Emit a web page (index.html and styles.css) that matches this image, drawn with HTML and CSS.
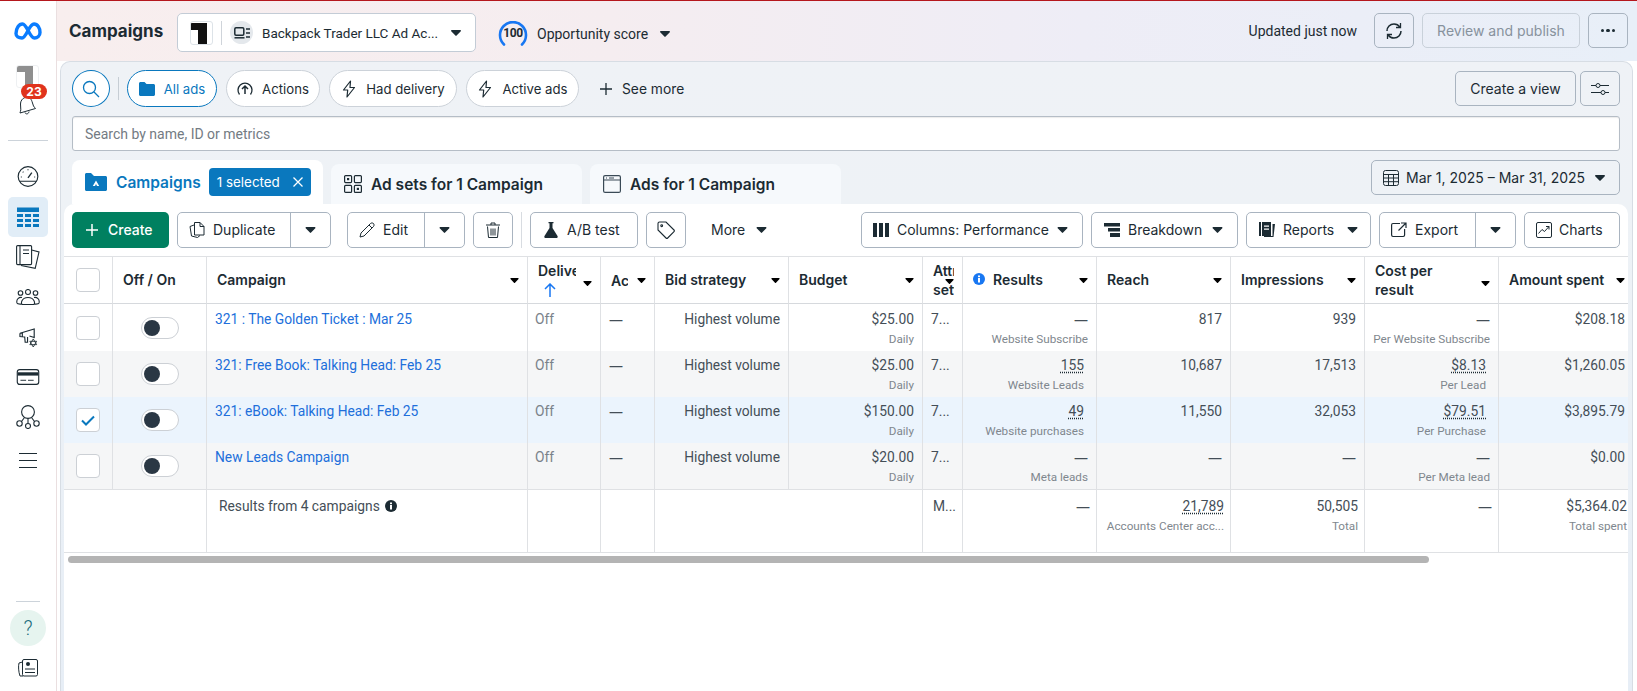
FILE: index.html
```html
<!DOCTYPE html>
<html lang="en">
<head>
<meta charset="utf-8">
<title>Campaigns</title>
<link rel="stylesheet" href="styles.css">
</head>
<body>
<svg class="defs" aria-hidden="true">
  <symbol id="i-caret" viewBox="0 0 10 6"><path d="M.8 0h8.4c.7 0 1 .7.6 1.200L5.600 5.600a.8.8 0 0 1-1.200 0L.2 1.200C-.2.7.1 0 .8 0z"/></symbol>
  <symbol id="i-flash" viewBox="0 0 16 18"><path d="M9.500 1 2.500 10h4.200L6 17l7.500-9.500H9L9.500 1z" fill="none" stroke="currentColor" stroke-width="1.200" stroke-linejoin="round"/></symbol>
</svg>
<div class="app">
  <aside class="sidebar">
    <svg class="meta" viewBox="0 0 28 18"><path d="M2 11.500C2 6 5 2 8.500 2c4.500 0 7 14 12 14 2.800 0 5.500-2 5.500-5.500C26 6 23.500 2 20 2c-5 0-7.500 14-12 14-3.500 0-6-1.500-6-4.500z" fill="none" stroke="#0a7cff" stroke-width="3.400"/></svg>
    <div class="avatar-block">
      <div class="avatar"><span class="avatar-bar"></span><span class="avatar-stem"></span></div>
      <svg class="bell" viewBox="0 0 20 20"><path d="M8 2.500c3-1 6 .5 7 4l1.500 4.500c.3 1 1.500 1.500 2 2.500L3 18c0-1 .8-2 .8-3.200L3.500 9C3.400 6 5.500 3.300 8 2.500zM8 17.500c.5 2 3.500 2 4-1" fill="none" stroke="#1c2b33" stroke-width="1"/></svg>
      <span class="badge-count">23</span>
    </div>
    <hr class="side-rule">
    <nav class="side-nav">
      <a class="side-item"><svg class="ico22" viewBox="0 0 22 22" fill="none" stroke="#1c2b33"><circle cx="11" cy="11" r="10.300" stroke-width="1.200"/><path d="M11 12.500 15 7" stroke-width="1.400"/><path d="M11 3.500v1M5.500 6l.7.7M3.500 11.500h1M17.500 11.500h1M2 16h18" stroke-width="1.200"/></svg></a>
      <a class="side-item active"><svg class="ico22" viewBox="0 0 22 20" fill="#0a78be"><rect x="0" y="0" width="22" height="4.500"/><rect x="0" y="6.500" width="6" height="3"/><rect x="8" y="6.500" width="6" height="3"/><rect x="16" y="6.500" width="6" height="3"/><rect x="0" y="11.500" width="6" height="3"/><rect x="8" y="11.500" width="6" height="3"/><rect x="16" y="11.500" width="6" height="3"/><rect x="0" y="16.500" width="6" height="3"/><rect x="8" y="16.500" width="6" height="3"/><rect x="16" y="16.500" width="6" height="3"/></svg></a>
      <a class="side-item"><svg class="ico24" viewBox="0 0 24 24" fill="none" stroke="#1c2b33" stroke-width="1.100"><rect x=".6" y=".6" width="15" height="19" rx="1"/><path d="M4 .6v19M7 5h6M7 8.500h6"/><path d="M15.600 5 23 7l-3.800 16.300L5 20.500"/></svg></a>
      <a class="side-item"><svg class="ico24h" viewBox="0 0 24 16" fill="none" stroke="#1c2b33" stroke-width="1.100"><circle cx="4.500" cy="4" r="2.300"/><circle cx="12" cy="3" r="2.500"/><circle cx="19.500" cy="4" r="2.300"/><path d="M1 14c-1-4 2-6 5-5.500M23 14c1-4-2-6-5-5.500M6.500 15.500c-2 0-1.500-7 5.500-7s7.500 7 5.500 7zM1 14c.3 1 3 1.200 5 1M23 14c-.3 1-3 1.200-5 1"/></svg></a>
      <a class="side-item"><svg class="ico18" viewBox="0 0 20 20" fill="none" stroke="#1c2b33" stroke-width="1.200"><path d="M1 5.500 16 1v9l-5-1.500M1 5.500v3.500l5 .5 .5 5.500h2.500v-5.500M3.500 5v4.200"/><path d="M15 11.500l3.600 6h-7.200zM15 20l-3.600-6h7.200z" stroke-width=".9"/></svg></a>
      <a class="side-item"><svg class="ico24h" viewBox="0 0 24 17" fill="none" stroke="#1c2b33"><rect x=".6" y=".6" width="22.800" height="15.800" rx="2.500" stroke-width="1.200"/><rect x="1" y="3.500" width="22" height="3.500" fill="#1c2b33" stroke="none"/><path d="M4 12h6M12 12h6" stroke-width="1"/></svg></a>
      <a class="side-item"><svg class="ico24t" viewBox="0 0 24 24" fill="none" stroke="#1c2b33" stroke-width="1.100"><circle cx="12" cy="7" r="6.400"/><circle cx="3.500" cy="18.500" r="2.700"/><circle cx="12" cy="21" r="2.500"/><circle cx="20.500" cy="18.500" r="2.700"/><path d="M12 13.500v5M8.500 12.500 5.500 16.500M15.500 12.500l3 4"/></svg></a>
      <a class="side-item menu"><svg class="ico18w" viewBox="0 0 18 15" stroke="#1c2b33" stroke-width="1"><path d="M0 .5h18M0 7.500h18M0 14.500h18"/></svg></a>
    </nav>
    <div class="side-foot">
      <hr class="side-rule short">
      <span class="help">?</span>
      <svg class="news" viewBox="0 0 20 18" fill="none" stroke="#1c2b33" stroke-width="1"><rect x="4.500" y=".5" width="15" height="16.500" rx="1.500"/><circle cx="10" cy="5" r="2" fill="#1c2b33" stroke="none"/><path d="M7 10h10M7 13.500h10"/><path d="M4.500 3 1 4c-.8 3-.5 9 1 13h3"/></svg>
    </div>
  </aside>

  <main class="main">
    <header class="header">
      <h1 class="title">Campaigns</h1>
      <div class="account">
        <span class="acc-logo"><span class="acc-bar"></span><span class="acc-stem"></span></span>
        <span class="acc-sep"></span>
        <span class="acc-round"><svg viewBox="0 0 16 12" width="16" height="12" fill="none" stroke="#1c2b33"><rect x=".8" y=".8" width="9" height="7.500" rx="1.200" stroke-width="1.500"/><path d="M.5 10.800h10" stroke-width="1.500"/><path d="M12 2h4M12 6h4M12 10h4" stroke-width="1.300"/></svg></span>
        <span class="acc-name">Backpack Trader LLC Ad Ac...</span>
        <svg class="caret acc-caret"><use href="#i-caret"/></svg>
      </div>
      <div class="score">
        <span class="ring"><svg viewBox="0 0 30 26" width="30" height="26" fill="none"><path d="M6 23.500A13 13 0 1 1 24 23.500" stroke="#1877f2" stroke-width="2.600" stroke-linecap="round"/></svg><b class="ring-num">100</b></span>
        <span class="score-label">Opportunity score</span>
        <svg class="caret"><use href="#i-caret"/></svg>
      </div>
      <div class="head-right">
        <span class="updated">Updated just now</span>
        <button class="hbtn icon-w40"><svg viewBox="0 0 18 18" width="18" height="18" fill="none" stroke="#1c2b33" stroke-width="1.500"><path d="M2 9c0-4 3-7 7-7 2.500 0 4.500 1 5.800 3M16 9c0 4-3 7-7 7-2.500 0-4.500-1-5.800-3"/><path d="M15.500 1v4.500H11M2.500 17v-4.500H7" stroke-width="1.300"/></svg></button>
        <button class="hbtn review">Review and publish</button>
        <button class="hbtn icon-w40 dots"><span></span><span></span><span></span></button>
      </div>
    </header>

    <section class="card">
      <div class="filters">
        <button class="search-round"><svg viewBox="0 0 18 18" width="18" height="18" fill="none" stroke="#0a78be" stroke-width="1.300"><circle cx="7.500" cy="7.500" r="6"/><path d="m12 12 5 5"/></svg></button>
        <span class="filter-sep"></span>
        <button class="pill pill-on w-all"><svg viewBox="0 0 16 14" width="16" height="14" fill="#0a78be"><path d="M0 1.500C0 .7.700 0 1.500 0h4l2 2h7c.8 0 1.500.7 1.500 1.500v9c0 .8-.7 1.500-1.500 1.500h-13C.7 14 0 13.300 0 12.500z"/></svg>All ads</button>
        <button class="pill w-actions"><svg viewBox="0 0 16 16" width="16" height="16" fill="none" stroke="#1c2b33" stroke-width="1.300"><path d="M2.500 13.500A7 7 0 1 1 13.500 13.500"/><path d="M8 13V5M5 8l3-3 3 3" stroke-width="1.500"/></svg>Actions</button>
        <button class="pill w-had"><svg class="ico-flash"><use href="#i-flash"/></svg>Had delivery</button>
        <button class="pill w-active"><svg class="ico-flash"><use href="#i-flash"/></svg>Active ads</button>
        <button class="see-more"><svg viewBox="0 0 12 12" width="12" height="12" stroke="#1c2b33" stroke-width="1.300"><path d="M6 0v12M0 6h12"/></svg>See more</button>
        <div class="filters-right">
          <button class="hbtn w-view">Create a view</button>
          <button class="hbtn icon-w40"><svg viewBox="0 0 18 14" width="18" height="14" fill="none" stroke="#1c2b33"><path d="M0 3.500h5M9 3.500h9M0 10.500h10M14 10.500h4"/><circle cx="7" cy="3.500" r="2"/><circle cx="12" cy="10.500" r="2"/></svg></button>
        </div>
      </div>
      <div class="search-box">Search by name, ID or metrics</div>
      <div class="tabs">
        <div class="tab tab-on">
          <svg viewBox="0 0 22 18" width="22" height="18"><path fill="#0a78be" d="M0 1.500C0 .7.700 0 1.500 0h4.500l3 3h11.500c.8 0 1.500.7 1.500 1.500v12c0 .8-.7 1.500-1.500 1.500h-19C.7 18 0 17.300 0 16.500z"/><path fill="#fff" d="M11 7.500l3.200 5.500h-2.200l-1-2-1 2H7.800z"/></svg>
          <span class="tab-text">Campaigns</span>
          <span class="selected">1 selected<svg viewBox="0 0 10 10" width="10" height="10" stroke="#fff" stroke-width="1.300"><path d="m.5.500 9 9M9.500.500l-9 9"/></svg></span>
        </div>
        <div class="tab tab-adsets">
          <svg viewBox="0 0 18 18" width="18" height="18" fill="none" stroke="#1c2b33" stroke-width="1.200"><rect x=".6" y=".6" width="7" height="7" rx="1"/><rect x="10.400" y=".6" width="7" height="7" rx="1"/><rect x=".6" y="10.400" width="7" height="7" rx="1"/><rect x="10.400" y="10.400" width="7" height="7" rx="1"/><rect x="3" y="3" width="2.200" height="2.200" fill="#1c2b33" stroke="none"/><rect x="12.800" y="12.800" width="2.200" height="2.200" fill="#1c2b33" stroke="none"/></svg>
          <span>Ad sets for 1 Campaign</span>
        </div>
        <div class="tab tab-ads">
          <svg viewBox="0 0 18 18" width="18" height="18" fill="none" stroke="#3a4a56" stroke-width="1.200"><rect x=".6" y=".6" width="16.800" height="16.800" rx="1.500"/><path d="M.6 5h16.800M3 3h1M6 3h5"/></svg>
          <span>Ads for 1 Campaign</span>
        </div>
        <button class="hbtn date"><svg viewBox="0 0 16 16" width="16" height="16" fill="none" stroke="#1c2b33"><rect x=".5" y=".5" width="15" height="15" rx="2"/><path d="M.5 4.500h15M.5 8h15M.5 11.700h15M5.500 4.500v11M10.500 4.500v11"/></svg>Mar 1, 2025 – Mar 31, 2025<svg class="caret push"><use href="#i-caret"/></svg></button>
      </div>

      <div class="panel">
        <div class="toolbar">
          <button class="btn create"><svg viewBox="0 0 12 12" width="12" height="12" stroke="#fff" stroke-width="1.500"><path d="M6 0v12M0 6h12"/></svg>Create</button>
          <div class="split w-dup">
            <button class="btn-main"><svg viewBox="0 0 16 16" width="16" height="16" fill="none" stroke="#1c2b33" stroke-width="1"><path d="M5.500.5H11l4 4v8.500H5.500zM11 .5v4h4"/><path d="M5 3 1 4.500 2.500 14l6 1.500 2.500-2"/></svg>Duplicate</button>
            <button class="btn-drop"><svg class="caret wide"><use href="#i-caret"/></svg></button>
          </div>
          <div class="split w-edit">
            <button class="btn-main"><svg viewBox="0 0 16 16" width="16" height="16" fill="none" stroke="#1c2b33" stroke-width="1"><path d="M1 15l1-4L11.500 1.500c.7-.7 2.300-.7 3 0s.7 2.300 0 3L5 14z"/><path d="M10 3l3 3"/></svg>Edit</button>
            <button class="btn-drop"><svg class="caret wide"><use href="#i-caret"/></svg></button>
          </div>
          <button class="btn w-icon"><svg viewBox="0 0 14 16" width="14" height="16" fill="none" stroke="#1c2b33"><path d="M0 3h14M5 3V1h4v2M1.500 4.500 2.500 15.500h9l1-11M5 6.500v7M7 6.500v7M9 6.500v7"/></svg></button>
          <span class="tool-sep"></span>
          <button class="btn w-ab"><svg viewBox="0 0 14 16" width="14" height="16" fill="#1c2b33"><path d="M4.500 0h5v1.200h-1V6l5 8c.6 1-.1 2-1.100 2H1.600c-1 0-1.700-1-1.100-2l5-8V1.200h-1z"/></svg>A/B test</button>
          <button class="btn w-icon"><svg viewBox="0 0 18 18" width="18" height="18" fill="none" stroke="#1c2b33" stroke-width="1.100"><path d="M1 2.500C1 1.700 1.700 1 2.500 1H9l8 8c.5.500.5 1.200 0 1.700L10.700 17c-.5.500-1.200.5-1.700 0L1 9z"/><circle cx="4.700" cy="4.700" r=".9"/></svg></button>
          <button class="more">More<svg class="caret wide"><use href="#i-caret"/></svg></button>
          <div class="tool-right">
            <button class="btn w-cols"><svg viewBox="0 0 16 14" width="16" height="14" fill="#1c2b33"><rect width="4" height="14"/><rect x="6" width="4" height="14"/><rect x="12" width="4" height="14"/></svg>Columns: Performance<svg class="caret wide push"><use href="#i-caret"/></svg></button>
            <button class="btn w-break"><svg viewBox="0 0 16 14" width="16" height="14" fill="#1c2b33"><rect width="16" height="3.500"/><rect x="4" y="5" width="12" height="3.500"/><rect x="6" y="10" width="10" height="4"/></svg>Breakdown<svg class="caret wide push"><use href="#i-caret"/></svg></button>
            <button class="btn w-rep"><svg viewBox="0 0 16 16" width="16" height="16" fill="#1c2b33"><rect x="0" y="0" width="2" height="14"/><path d="M3 0h9v14H3zM5 3.500v1.200h5V3.500zM5 6.500v1.200h5V6.500z" fill-rule="evenodd"/><path d="M13.500 2H16l-1.500 13H5v-1h8.500z"/></svg>Reports<svg class="caret wide push"><use href="#i-caret"/></svg></button>
            <div class="split w-exp">
              <button class="btn-main"><svg viewBox="0 0 16 16" width="16" height="16" fill="none" stroke="#1c2b33" stroke-width="1.200"><path d="M9 1.500H2c-.8 0-1.400.6-1.400 1.400v10.200c0 .8.600 1.400 1.400 1.400h10.200c.8 0 1.400-.6 1.400-1.400V7"/><path d="M10 1h5v5M15 1 7.500 8.500"/></svg>Export</button>
              <button class="btn-drop"><svg class="caret wide"><use href="#i-caret"/></svg></button>
            </div>
            <button class="btn w-charts"><svg viewBox="0 0 16 16" width="16" height="16" fill="none" stroke="#1c2b33"><rect x=".5" y=".5" width="15" height="15" rx="1.500"/><path d="m2.500 11.500 3.500-4 2.500 2 4.500-5M10 4.500h3v3"/></svg>Charts</button>
          </div>
        </div>

        <div class="table-wrap">
          <table class="grid">
            <colgroup>
              <col class="c-check"><col class="c-toggle"><col class="c-name"><col class="c-deliv"><col class="c-ac"><col class="c-bid"><col class="c-budget"><col class="c-attr"><col class="c-data"><col class="c-reach"><col class="c-imp"><col class="c-cost"><col class="c-spent">
            </colgroup>
            <thead>
              <tr>
                <th class="center"><span class="check"></span></th>
                <th><div class="th"><span>Off / On</span></div></th>
                <th><div class="th"><span>Campaign</span><svg class="caret small"><use href="#i-caret"/></svg></div></th>
                <th><div class="th"><span class="th-clip w38">Delivery<svg class="arrow" viewBox="0 0 12 14" width="12" height="14" fill="none" stroke="#1877f2" stroke-width="1.500"><path d="M6 14V1.500M1 6l5-5 5 5"/></svg></span><svg class="caret small low"><use href="#i-caret"/></svg></div></th>
                <th><div class="th"><span class="th-clip w17">Actions</span><svg class="caret small"><use href="#i-caret"/></svg></div></th>
                <th><div class="th"><span>Bid strategy</span><svg class="caret small"><use href="#i-caret"/></svg></div></th>
                <th><div class="th"><span>Budget</span><svg class="caret small"><use href="#i-caret"/></svg></div></th>
                <th><div class="th th-attr"><span class="th-clip w24">Attribution setting</span><svg class="caret small over"><use href="#i-caret"/></svg></div></th>
                <th><div class="th"><span class="with-info"><svg viewBox="0 0 12 12" width="12" height="12"><circle cx="6" cy="6" r="6" fill="#1877f2"/><rect x="5" y="5" width="2" height="4.500" fill="#fff"/><rect x="5" y="2.500" width="2" height="1.700" fill="#fff"/></svg>Results</span><svg class="caret small"><use href="#i-caret"/></svg></div></th>
                <th><div class="th"><span>Reach</span><svg class="caret small"><use href="#i-caret"/></svg></div></th>
                <th><div class="th"><span>Impressions</span><svg class="caret small"><use href="#i-caret"/></svg></div></th>
                <th><div class="th"><span class="w80">Cost per result</span><svg class="caret small low"><use href="#i-caret"/></svg></div></th>
                <th><div class="th"><span>Amount spent</span><svg class="caret small"><use href="#i-caret"/></svg></div></th>
              </tr>
            </thead>
            <tbody>
              <tr class="first">
                <td class="center"><span class="check"></span></td>
                <td class="center"><span class="toggle"></span></td>
                <td class="text"><a class="link">321 : The Golden Ticket : Mar 25</a></td>
                <td class="text off">Off</td><td class="text"><span class="dash">—</span></td><td class="num">Highest volume</td>
                <td class="num"><div>$25.00</div><div class="sub">Daily</div></td>
                <td class="text">7...</td>
                <td class="num"><div><span class="dash">—</span></div><div class="sub">Website Subscribe</div></td>
                <td class="num">817</td><td class="num">939</td>
                <td class="num"><div><span class="dash">—</span></div><div class="sub">Per Website Subscribe</div></td>
                <td class="num">$208.18</td>
              </tr>
              <tr class="alt">
                <td class="center"><span class="check"></span></td>
                <td class="center"><span class="toggle"></span></td>
                <td class="text"><a class="link">321: Free Book: Talking Head: Feb 25</a></td>
                <td class="text off">Off</td><td class="text"><span class="dash">—</span></td><td class="num">Highest volume</td>
                <td class="num"><div>$25.00</div><div class="sub">Daily</div></td>
                <td class="text">7...</td>
                <td class="num dotted"><div><u>155</u></div><div class="sub">Website Leads</div></td>
                <td class="num">10,687</td><td class="num">17,513</td>
                <td class="num dotted"><div><u>$8.13</u></div><div class="sub">Per Lead</div></td>
                <td class="num">$1,260.05</td>
              </tr>
              <tr class="sel">
                <td class="center"><span class="check on"><svg viewBox="0 0 14 11" width="14" height="11" fill="none" stroke="#0a78be" stroke-width="2"><path d="m1 5.500 4 4 8-8"/></svg></span></td>
                <td class="center"><span class="toggle"></span></td>
                <td class="text"><a class="link">321: eBook: Talking Head: Feb 25</a></td>
                <td class="text off">Off</td><td class="text"><span class="dash">—</span></td><td class="num">Highest volume</td>
                <td class="num"><div>$150.00</div><div class="sub">Daily</div></td>
                <td class="text">7...</td>
                <td class="num dotted"><div><u>49</u></div><div class="sub">Website purchases</div></td>
                <td class="num">11,550</td><td class="num">32,053</td>
                <td class="num dotted"><div><u>$79.51</u></div><div class="sub">Per Purchase</div></td>
                <td class="num">$3,895.79</td>
              </tr>
              <tr class="alt last">
                <td class="center"><span class="check"></span></td>
                <td class="center"><span class="toggle"></span></td>
                <td class="text"><a class="link">New Leads Campaign</a></td>
                <td class="text off">Off</td><td class="text"><span class="dash">—</span></td><td class="num">Highest volume</td>
                <td class="num"><div>$20.00</div><div class="sub">Daily</div></td>
                <td class="text">7...</td>
                <td class="num"><div><span class="dash">—</span></div><div class="sub">Meta leads</div></td>
                <td class="num"><span class="dash">—</span></td><td class="num"><span class="dash">—</span></td>
                <td class="num"><div><span class="dash">—</span></div><div class="sub">Per Meta lead</div></td>
                <td class="num">$0.00</td>
              </tr>
            </tbody>
            <tfoot>
              <tr>
                <td colspan="2"></td>
                <td class="text foot-name"><span>Results from 4 campaigns</span><svg viewBox="0 0 12 12" width="12" height="12"><circle cx="6" cy="6" r="6" fill="#1c2b33"/><rect x="5" y="5" width="2" height="4.500" fill="#fff"/><rect x="5" y="2.500" width="2" height="1.700" fill="#fff"/></svg></td>
                <td></td><td></td><td colspan="2"></td>
                <td class="text foot-attr">M...</td>
                <td class="num"><span class="dash">—</span></td>
                <td class="num"><div><u>21,789</u></div><div class="sub">Accounts Center acc...</div></td>
                <td class="num"><div>50,505</div><div class="sub">Total</div></td>
                <td class="num"><span class="dash">—</span></td>
                <td class="num"><div>$5,364.02</div><div class="sub">Total spent</div></td>
              </tr>
            </tfoot>
          </table>
        </div>
        <div class="scrollbar"></div>
      </div>
    </section>
  </main>
</div>
</body>
</html>
```
FILE: styles.css
```css
* { box-sizing: border-box; }
html, body { margin: 0; height: 100%; }
body { font-family: "Roboto", "Liberation Sans", sans-serif; font-size: 14px; color: #1c2b33; background: #fff; overflow: hidden; }
.defs { display: none; }
button { font: inherit; color: inherit; background: none; border: 0; padding: 0; cursor: pointer; }
a { color: inherit; }
.app { display: flex; height: 691px; border-top: 1px solid #b5171d; overflow: hidden; }
.caret { width: 10px; height: 6px; fill: #1c2b33; flex: none; display: block; }
.caret.small { width: 9px; height: 5px; fill: #000; }
.caret.low { margin-top: 6px; }
.push { margin-left: auto; }

/* sidebar */
.sidebar { width: 57px; flex: none; background: #fff; border-right: 1px solid #eadfe0; display: flex; flex-direction: column; align-items: center; padding-top: 21px; }
.meta { width: 28px; height: 18px; display: block; }
.avatar-block { position: relative; width: 40px; height: 50px; margin-top: 25px; }
.avatar { position: absolute; left: 8px; top: 0; width: 23px; height: 23px; border: 1px solid #eef0f2; border-radius: 3px; overflow: hidden; background: #fff; }
.avatar-bar { position: absolute; left: 0; top: 0; width: 16px; height: 6px; background: #8f8f8f; }
.avatar-stem { position: absolute; left: 8px; top: 0; width: 8px; height: 23px; background: #8f8f8f; }
.bell { position: absolute; left: 9px; top: 30px; width: 20px; height: 20px; }
.badge-count { position: absolute; left: 13px; top: 19px; width: 26px; height: 15px; border-radius: 8px; background: #e0331c; color: #fff; font: 700 12px/15px "Inter", sans-serif; text-align: center; }
.side-rule { width: 40px; height: 1px; margin: 25px 0 0; border: 0; background: #ccd3da; flex: none; }
.side-rule.short { width: 24px; margin: 0; }
.side-nav { margin-top: 15px; display: flex; flex-direction: column; }
.side-item { width: 40px; height: 40px; display: flex; align-items: center; justify-content: center; border-radius: 5px; }
.side-item.active { background: #e1edf7; margin-top: 1px; }
.side-item.menu { margin-top: 3px; }
.ico22 { width: 22px; height: 21px; display: block; }
.ico24 { width: 24px; height: 24px; display: block; }
.ico24h { width: 24px; height: 16px; display: block; }
.ico18 { width: 19px; height: 19px; display: block; }
.ico24t { width: 24px; height: 24px; display: block; }
.ico18w { width: 18px; height: 15px; display: block; }
.side-foot { margin-top: auto; display: flex; flex-direction: column; align-items: center; padding-bottom: 14px; }
.help { width: 36px; height: 36px; margin-top: 8px; border-radius: 50%; background: #e6f4ef; color: #1b6c7c; display: flex; align-items: center; justify-content: center; font-size: 20px; font-weight: 300; }
.news { width: 20px; height: 18px; margin-top: 13px; display: block; }

/* main */
.main { flex: 1; min-width: 0; display: flex; flex-direction: column; background: #fff; }
.header { height: 60px; flex: none; display: flex; align-items: flex-start; padding: 12px 9px 0 12px; background: linear-gradient(90deg, #f8eeee 0%, #f5edf0 35%, #eeedf6 65%, #e8eff8 100%); }
.title { margin: 3px 0 0; width: 95px; font: 700 17px/30px "Inter", sans-serif; white-space: nowrap; }
.account { margin-left: 13px; width: 299px; height: 39px; display: flex; align-items: center; padding: 0 14px 0 12px; background: #fff; border: 1px solid #c3ccd6; border-radius: 5px; }
.acc-logo { position: relative; width: 23px; height: 24px; border: 1px solid #dde3e8; border-radius: 3px; flex: none; overflow: hidden; }
.acc-bar { position: absolute; left: 0; top: 1px; width: 16px; height: 7px; background: #111; }
.acc-stem { position: absolute; left: 7px; top: 1px; width: 9px; height: 21px; background: #111; }
.acc-sep { width: 1px; height: 24px; margin: 0 8px; background: #cfd4da; flex: none; }
.acc-round { width: 23px; height: 23px; border-radius: 50%; background: #e4e8ec; display: flex; align-items: center; justify-content: center; flex: none; }
.acc-name { margin-left: 9px; font-size: 13.500px; white-space: nowrap; width: 176px; }
.acc-caret { margin-left: auto; }
.score { margin-left: 22px; height: 35px; display: flex; align-items: center; margin-top: 3px; }
.ring { position: relative; width: 30px; height: 26px; display: block; flex: none; }
.ring svg { display: block; }
.ring-num { position: absolute; left: 0; right: 0; top: 5px; text-align: center; font: 700 12px/14px "Roboto", sans-serif; letter-spacing: -.4px; }
.score-label { margin-left: 9px; white-space: nowrap; width: 112px; }
.score .caret { margin-left: 11px; }
.head-right { margin-left: auto; display: flex; align-items: center; gap: 8px; }
.updated { margin-right: 9px; white-space: nowrap; }
.hbtn { height: 35px; border: 1px solid #a9b4c0; border-radius: 5px; display: flex; align-items: center; justify-content: center; font-family: "Inter", sans-serif; white-space: nowrap; }
.icon-w40 { width: 40px; }
.review { width: 158px; color: #87929d; border-color: #c9d1da; }
.dots { gap: 2px; }
.dots span { width: 3.500px; height: 3.500px; border-radius: 50%; background: #1c2b33; }

/* card */
.card { flex: 1; min-height: 0; margin: 0 4px 0 3px; border: 1px solid #d7dde4; border-bottom: 0; border-radius: 10px 10px 0 0; padding-top: 8px; background: linear-gradient(180deg, #eff2f6 0, #eef2f6 150px, #e7eef6 100%); display: flex; flex-direction: column; }
.filters { display: flex; align-items: center; height: 37px; flex: none; padding: 0 12px 0 11px; font-family: "Inter", sans-serif; }
.search-round { width: 38px; height: 37px; border: 1px solid #0a78be; border-radius: 50%; background: #fff; display: flex; align-items: center; justify-content: center; flex: none; }
.filter-sep { width: 1px; height: 23px; margin: 0 8px; background: #c6cdd4; }
.pill { height: 37px; border: 1px solid #ccd2d9; border-radius: 19px; background: #fff; display: flex; align-items: center; justify-content: center; gap: 9px; margin-right: 9px; flex: none; white-space: nowrap; font-size: 13.200px; }
.pill-on { border-color: #0a78be; color: #0a78be; }
.w-all { width: 90px; }
.w-actions { width: 94px; }
.w-had { width: 128px; }
.w-active { width: 113px; }
.ico-flash { width: 16px; height: 18px; display: block; flex: none; }
.see-more { margin-left: 12px; display: flex; align-items: center; gap: 10px; white-space: nowrap; font-size: 13.800px; }
.filters-right { margin-left: auto; display: flex; gap: 4px; }
.w-view { width: 121px; padding-bottom: 1px; }
.search-box { height: 35px; flex: none; margin: 9px 12px 0 11px; padding-left: 12px; background: #fff; border: 1px solid #b5bdc6; border-radius: 3px; box-shadow: inset 0 1px 1px rgba(0,0,0,.08); color: #737b83; line-height: 34px; }
.tabs { height: 44px; flex: none; margin: 9px 12px 0 11px; display: flex; align-items: flex-end; font-family: "Inter", sans-serif; }
.tab { height: 40px; display: flex; align-items: center; gap: 9px; background: #f6f9fc; border-radius: 8px 8px 0 0; font-weight: 600; font-size: 15.500px; white-space: nowrap; padding-left: 13px; }
.tab-on { height: 44px; width: 251px; gap: 10px; background: #fff; color: #0a78be; margin-right: 8px; }
.tab-on svg:first-child { margin-right: -1px; }
.tab-adsets { width: 251px; margin-right: 8px; }
.tab-ads { width: 251px; }
.selected { height: 28px; width: 102px; margin-left: -2px; padding: 0 9px 0 8px; background: #0a78be; color: #fff; border-radius: 4px; display: flex; align-items: center; justify-content: space-between; font-weight: 400; font-size: 13.400px; }
.date { align-self: flex-start; margin-left: auto; width: 249px; gap: 7px; justify-content: flex-start; padding: 0 14px 0 11px; }

/* panel */
.panel { flex: 1; min-height: 0; margin: 0 4px 0 3px; background: #fff; border-radius: 10px 10px 0 0; overflow: hidden; }
.toolbar { display: flex; align-items: center; height: 52px; padding: 0 8px; font-family: "Inter", sans-serif; white-space: nowrap; }
.btn { height: 36px; border: 1px solid #a9b4c0; border-radius: 5px; display: flex; align-items: center; justify-content: center; gap: 8px; flex: none; background: #fff; padding-bottom: 1px; }
.create { width: 97px; border: 0; margin-right: 8px; background: #008060; color: #fff; font-weight: 500; justify-content: flex-start; padding-left: 14px; gap: 10px; }
.split { height: 36px; border: 1px solid #a9b4c0; border-radius: 5px; display: flex; flex: none; background: #fff; }
.btn-main { flex: 1; display: flex; align-items: center; justify-content: flex-start; gap: 8px; padding: 0 0 1px 11px; }
.btn-drop { border-left: 1px solid #a9b4c0; display: flex; align-items: center; justify-content: center; }
.caret.wide { width: 11px; height: 6px; }
.w-dup { width: 154px; margin-right: 16px; }
.w-dup .btn-drop { width: 40px; }
.w-edit { width: 118px; margin-right: 8px; }
.w-edit .btn-drop { width: 40px; }
.w-icon { width: 40px; }
.tool-sep { width: 1px; height: 36px; margin: 0 8px; background: #d8dce1; flex: none; }
.w-ab { width: 108px; margin-right: 8px; justify-content: flex-start; padding-left: 13px; gap: 9px; }
.more { margin-left: 25px; display: flex; align-items: center; gap: 11px; padding-bottom: 1px; }
.tool-right { margin-left: auto; display: flex; gap: 8px; }
.w-cols { width: 222px; justify-content: flex-start; padding: 0 14px 1px 11px; gap: 8px; }
.w-break { width: 147px; justify-content: flex-start; padding: 0 14px 1px 12px; gap: 8px; }
.w-rep { width: 125px; justify-content: flex-start; padding: 0 12px 1px; gap: 8px; }
.w-exp { width: 137px; }
.w-exp .btn-drop { width: 40px; }
.w-charts { width: 96px; justify-content: flex-start; padding-left: 11px; gap: 7px; }

/* table */
.table-wrap { overflow: hidden; }
.grid { width: 1569px; table-layout: fixed; border-collapse: separate; border-spacing: 0; }
.c-check { width: 49px; } .c-toggle { width: 94px; } .c-name { width: 321px; } .c-deliv { width: 73px; } .c-ac { width: 54px; }
.c-bid { width: 134px; } .c-budget { width: 134px; } .c-attr { width: 40px; } .c-data { width: 134px; } .c-reach { width: 134px; }
.c-imp { width: 134px; } .c-cost { width: 134px; } .c-spent { width: 135px; }
th, td { padding: 0; border-right: 1px solid #dfe1e4; }
thead th { height: 48px; border-top: 1px solid #dfe1e4; border-bottom: 1px solid #d6d9dd; font: 600 14px/19px "Inter", sans-serif; text-align: left; }
.th { position: relative; display: flex; align-items: center; justify-content: space-between; padding: 0 8px 0 10px; height: 46px; }
.th > span:not(.th-clip):not(.w80) { margin-bottom: 2px; }
.th-clip { display: block; overflow: hidden; }
.w38 { width: 38px; height: 38px; white-space: nowrap; position: relative; }
.w38 .arrow { position: absolute; left: 6px; top: 22px; }
.w17 { width: 17px; height: 19px; white-space: nowrap; }
.w24 { width: 24px; height: 38px; white-space: normal; }
.w80 { width: 70px; }
.over { position: absolute; left: 22px; top: 22px; }
.with-info { display: flex; align-items: center; gap: 8px; }
tbody td { height: 46px; vertical-align: top; }
tbody tr.first td { height: 47px; }
tbody tr.alt td { background: #f5f6f7; }
tbody tr.sel td { background: #ebf4fd; }
tbody tr.last td { border-bottom: 1px solid #dfe1e4; height: 47px; }
.center { text-align: center; vertical-align: middle; }
tbody td.center { vertical-align: middle; }
.check { display: inline-flex; align-items: center; justify-content: center; width: 24px; height: 24px; border: 1px solid #ccd0d5; border-radius: 4px; background: #fff; vertical-align: middle; }
.toggle { position: relative; display: inline-block; width: 38px; height: 22px; border: 1px solid #ccd0d5; border-radius: 11px; background: #fff; vertical-align: middle; }
.toggle::before { content: ""; position: absolute; left: 2px; top: 2px; width: 16px; height: 16px; border-radius: 50%; background: #2a3744; }
.text { padding: 6px 8px 0; font-size: 13.800px; line-height: 18px; color: #444e57; white-space: nowrap; overflow: hidden; }
.off { color: #7a828a; padding-left: 7px; }
.link { color: #216fdb; }
.dash { font-family: "Open Sans", sans-serif; font-size: 14px; line-height: 18px; position: relative; top: 1px; }
.num { padding: 6px 8px 0; text-align: right; font-size: 13.800px; line-height: 18px; color: #444e57; white-space: nowrap; overflow: hidden; }
.sub { font-size: 11.700px; line-height: 22px; color: #80878e; }
.dotted { padding-right: 12px; }
tbody tr.alt .text, tbody tr.alt .num, tbody tr.sel .text, tbody tr.sel .num { padding-top: 5px; }
u { text-decoration: underline dotted #1c2b33; text-underline-offset: 2px; }
tfoot td { height: 63px; vertical-align: top; border-bottom: 1px solid #dfe1e4; }
tfoot .num, tfoot .text { padding-top: 7px; }
tfoot .num { padding-right: 6px; }
.foot-name { padding-left: 12px; }
.foot-name span { margin-right: 5px; }
.foot-name svg { vertical-align: -1px; }
.foot-attr { padding-left: 10px; }
.scrollbar { width: 1361px; height: 7px; margin: 3px 0 0 4px; background: #b4b4b4; border-radius: 4px; }
```
